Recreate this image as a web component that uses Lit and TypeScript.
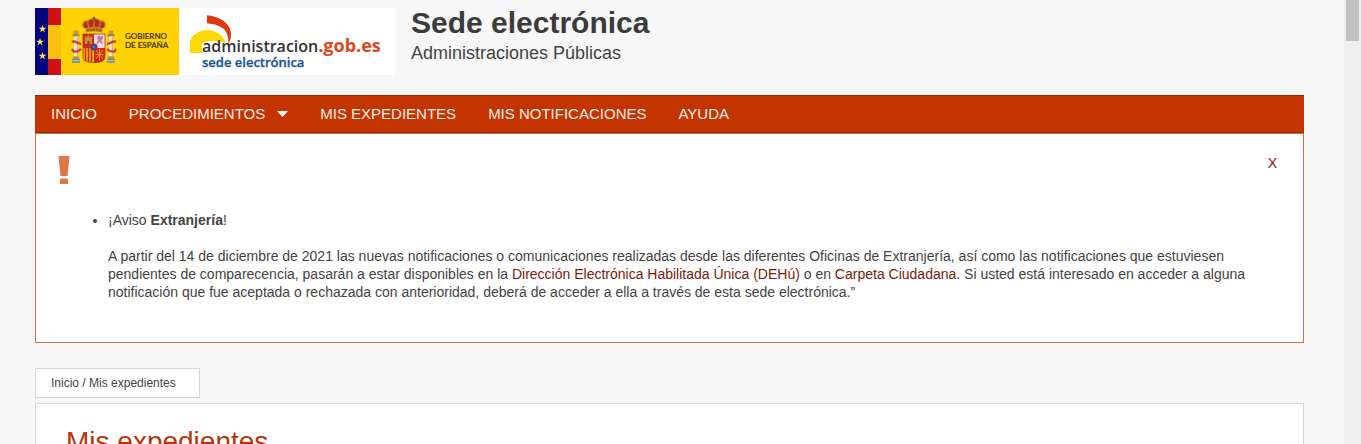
import { LitElement, html, css, svg } from "lit";
import { customElement, state } from "lit/decorators.js";

const STAR = "0,-4 1,-1.3 3.8,-1.2 1.5,0.5 2.4,3.2 0,1.6 -2.4,3.2 -1.5,0.5 -3.8,-1.2 -1,-1.3";

@customElement("sede-logo")
export class SedeLogo extends LitElement {
  static styles = css`
    :host {
      display: block;
      flex: none;
    }
    .logo {
      display: block;
      width: 360px;
      height: 67px;
    }
    .gov {
      font: 500 8px Lato, sans-serif;
      fill: #3d3510;
      stroke: #3d3510;
      stroke-width: 0.2px;
    }
    .site {
      font: 600 16px "Open Sans", sans-serif;
      fill: #333;
    }
    .domain {
      font-size: 18px;
      font-weight: 700;
      fill: #d9481c;
    }
    .sub {
      font: 600 13px "Open Sans", sans-serif;
      fill: #17549a;
      stroke: #17549a;
      stroke-width: 0.3px;
    }
  `;

  private column(x: number) {
    return svg`
      <g transform="translate(${x} 0)">
        <rect x="0.5" y="22.5" width="5" height="3.5" rx="1" fill="#c9952c" />
        <rect x="-0.5" y="26" width="7" height="2.5" fill="#a9873a" />
        <rect x="1" y="28.5" width="4" height="20" fill="#e9e6dc" />
        <rect x="3.8" y="28.5" width="1.2" height="20" fill="#bdb9a8" />
        <rect x="0" y="48.5" width="6" height="2.2" fill="#b98b2e" />
        <rect x="-1" y="50.7" width="8" height="4" fill="#6f8791" />
        <path d="M-1 52.7h8" stroke="#d9dfdc" stroke-width="0.8" />
      </g>`;
  }

  render() {
    return html`
      <svg class="logo" viewBox="0 0 360 67" role="img" aria-label="Gobierno de España, administracion.gob.es">
        <rect width="360" height="67" fill="#fff" />
        <rect width="13" height="67" fill="#04047c" />
        ${[[7.5, 21], [5, 34], [7.5, 48]].map(
          ([x, y]) => svg`<polygon points=${STAR} transform="translate(${x} ${y})" fill="#ffe45a" />`
        )}
        <rect x="13" width="131" height="67" fill="#ffd205" />
        <rect x="13" width="13" height="17" fill="#cd1216" />
        <rect x="13" y="17" width="13" height="34" fill="#fcc010" />
        <rect x="13" y="51" width="13" height="16" fill="#cd1216" />

        ${this.column(38)} ${this.column(73)}
        <path d="M37 34c3-2 6 2 9 2M38 41c-2 3 4 4 8 0" fill="none" stroke="#d33a35" stroke-width="2.4" />
        <path d="M81 34c-3-2-6 2-9 2M80 41c2 3-4 4-8 0" fill="none" stroke="#d33a35" stroke-width="2.4" />

        <path d="M49 20c-3-4 0-8 4-7 1-2 4-3 6-2 2-1 5 0 6 2 4-1 7 3 4 7z" fill="#b8281f" />
        <path d="M49 20c-3-4 0-8 4-7M53 13c-1 3 0 5 1 7M59 11v9M65 13c1 3 0 5-1 7M69 20c3-4 0-8-4-7M53 13c2-3 10-3 12 0" fill="none" stroke="#c98a22" stroke-width="1.2" />
        <circle cx="59" cy="11.5" r="1.3" fill="#8a5a20" />
        <path d="M59 8.5v3M57.8 9.7h2.4" stroke="#7a4a1c" stroke-width="0.8" />
        <path d="M50 20q9-2.5 18 0l-1 4.5q-8-1.8-16 0z" fill="#b8861f" />
        <path d="M52 22.5q7-1.6 14 0" fill="none" stroke="#b02a22" stroke-width="1.3" stroke-dasharray="2 1" />

        <path d="M48 26h11v14H48z" fill="#d5261c" />
        <path d="M59 26h11v14H59z" fill="#f3dce3" />
        <path d="M48 40h11v14.5c-6 0-11-1-11-6z" fill="#eeb416" />
        <path d="M59 40h11v8.5c0 5-5 6-11 6z" fill="#d5261c" />
        <path d="M50 31v-2.5h1.5v1h1v-2h2v2h1v-1H57V31v5h-7z" fill="#c9912a" />
        <path d="M52.5 36v-3h2v3" fill="#7a3a1c" />
        <path d="M62 29l2-1.5 2 1 2-1v3l-1.5 2 1.5 3h-2l-1.5-2-1.5 2h-2l2-3z" fill="#c778a8" />
        <path d="M50.5 40v13M53.5 40v14M56.5 40v14" stroke="#cf2b1f" stroke-width="1.5" />
        <path d="M61 42l7 9M68 42l-7 9M64.5 41v12M60.5 46.5h8" stroke="#d9a329" stroke-width="0.9" />
        <path d="M48 26h22v22.5c0 5-5 6-11 6s-11-1-11-6z" fill="none" stroke="#9e3a24" stroke-width="0.8" />
        <circle cx="59" cy="39" r="3.6" fill="#b02a30" />
        <circle cx="59" cy="39" r="2.8" fill="#284f92" />
        <circle cx="59" cy="39" r="0.9" fill="#8a93a8" />

        <text class="gov" x="90" y="31">GOBIERNO</text>
        <text class="gov" x="90" y="40">DE ESPAÑA</text>

        <path d="M155 45V33c3-7 10-11 17-11 9 0 15 5 19.5 13-7-2-18-3-24 0-1 3-.5 6-.5 10z" fill="#ffd800" />
        <path d="M172 7.300c14 1.500 24 9 24 19 0 4-1 7-2.500 10 0-5-.5-10-3.500-14-4-4-9-6-18-7z" fill="#e03a0a" />
        <text class="site" x="167" y="44">administracion<tspan class="domain">.gob.es</tspan></text>
        <text class="sub" x="167" y="59">sede electrónica</text>
      </svg>
    `;
  }
}

@customElement("app-root")
export class AppRoot extends LitElement {
  static styles = css`
    :host {
      display: grid;
      grid-template-columns: minmax(0, 1fr) 17px;
      height: 100vh;
      overflow: hidden;
      background: #f7f7f7;
      color: #434343;
      font: 14px/18px "Liberation Sans", Arial, sans-serif;
    }
    .page {
      padding: 8px 40px 0 35px;
      overflow: hidden;
    }
    .track {
      padding: 0 2px;
      background: #f0f0f0;
    }
    .thumb {
      height: 41px;
      background: #c1c1c1;
    }
    a {
      color: #782209;
      text-decoration: none;
    }
    .header {
      display: flex;
      gap: 16px;
      margin-bottom: 20px;
    }
    .title {
      margin: 0;
      color: #3b3b3b;
      font-size: 30px;
      line-height: 30px;
    }
    .subtitle {
      margin: 4px 0 0;
      font-size: 18px;
      line-height: 22px;
    }
    .menu {
      display: flex;
      gap: 32px;
      margin: 0;
      padding: 0 16px;
      list-style: none;
      background: #c33400;
      border: solid #8f2a06;
      border-width: 1px 0;
      font-size: 15px;
      line-height: 36px;
    }
    .menu a {
      display: flex;
      align-items: center;
      gap: 12px;
      color: #fbeee8;
    }
    .arrow {
      width: 11px;
      height: 6px;
      fill: #fff;
    }
    .notice {
      padding: 22px 22px 41px;
      background: #fff;
      border: 1px solid #d0714f;
      margin-bottom: 25px;
    }
    .notice-top {
      display: flex;
      justify-content: space-between;
      align-items: flex-start;
      padding-right: 4px;
      margin-bottom: 27px;
    }
    .mark {
      width: 12px;
      height: 28px;
      fill: #e37546;
    }
    .close {
      padding: 0;
      border: 0;
      background: none;
      color: #782209;
      font: inherit;
      line-height: 14px;
      cursor: pointer;
    }
    .notices {
      margin: 0;
      padding: 0 22px 0 50px;
    }
    .notices p {
      margin: 0 0 18px;
    }
    .notices p:last-child {
      margin: 0;
    }
    .crumbs {
      width: fit-content;
      padding: 5px 23px 5px 15px;
      margin-bottom: 5px;
      background: #fff;
      border: 1px solid #d6d6d6;
      font-size: 12px;
    }
    .crumbs a {
      color: inherit;
    }
    .content {
      padding: 20px 30px;
      background: #fff;
      border: 1px solid #d6d6d6;
    }
    .heading {
      margin: 0;
      color: #b83407;
      font-size: 28px;
      font-weight: 400;
      line-height: 36px;
    }
  `;

  @state() private noticeOpen = true;

  private menu = [
    { label: "INICIO" },
    { label: "PROCEDIMIENTOS", sub: true },
    { label: "MIS EXPEDIENTES" },
    { label: "MIS NOTIFICACIONES" },
    { label: "AYUDA" },
  ];

  private renderNotice() {
    return html`
      <section class="notice" aria-label="Aviso">
        <div class="notice-top">
          <svg class="mark" viewBox="0 0 12 28" aria-hidden="true">
            <path d="M0.5 0h11L9.5 20h-7zM2 22.5h8V28H2z" />
          </svg>
          <button class="close" type="button" @click=${() => (this.noticeOpen = false)}>X</button>
        </div>
        <ul class="notices">
          <li>
            <p>¡Aviso <strong>Extranjería</strong>!</p>
            <p>
              A partir del 14 de diciembre de 2021 las nuevas notificaciones o comunicaciones realizadas desde las
              diferentes Oficinas de Extranjería, así como las notificaciones que estuviesen pendientes de
              comparecencia, pasarán a estar disponibles en la
              <a href="#dehu">Dirección Electrónica Habilitada Única (DEHú)</a> o en
              <a href="#carpeta">Carpeta Ciudadana</a>. Si usted está interesado en acceder a alguna notificación que
              fue aceptada o rechazada con anterioridad, deberá de acceder a ella a través de esta sede electrónica.”
            </p>
          </li>
        </ul>
      </section>
    `;
  }

  render() {
    return html`
      <div class="page">
        <header class="header">
          <sede-logo></sede-logo>
          <div>
            <h1 class="title">Sede electrónica</h1>
            <p class="subtitle">Administraciones Públicas</p>
          </div>
        </header>
        <nav>
          <ul class="menu">
            ${this.menu.map(
              (item) => html`<li>
                <a href="#"
                  >${item.label}${item.sub
                    ? html`<svg class="arrow" viewBox="0 0 11 6" aria-hidden="true"><path d="M0 0h11L5.5 6z" /></svg>`
                    : ""}</a
                >
              </li>`
            )}
          </ul>
        </nav>
        ${this.noticeOpen ? this.renderNotice() : ""}
        <nav class="crumbs"><a href="#">Inicio</a> / <span>Mis expedientes</span></nav>
        <main class="content">
          <h2 class="heading">Mis expedientes</h2>
        </main>
      </div>
      <div class="track" aria-hidden="true"><div class="thumb"></div></div>
    `;
  }
}
